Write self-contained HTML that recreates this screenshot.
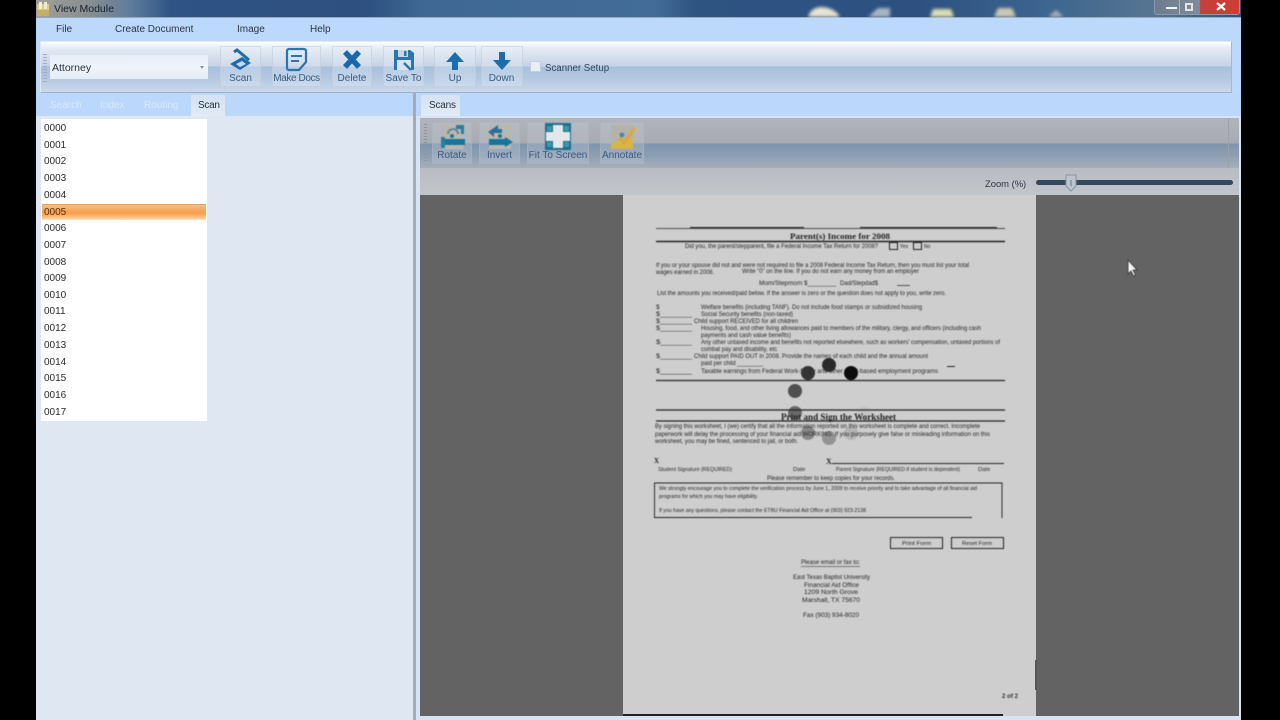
<!DOCTYPE html>
<html><head><meta charset="utf-8"><title>View Module</title>
<style>
html,body{margin:0;padding:0;width:1280px;height:720px;overflow:hidden;background:#000}
*{box-sizing:border-box}
body{font-family:"Liberation Sans",sans-serif}
#w{position:absolute;left:0;top:0;width:1280px;height:720px;overflow:hidden;filter:blur(.35px)}
.a{position:absolute}
.t{position:absolute;white-space:nowrap;line-height:12px;transform:translateY(-5px)}
.btn{position:absolute;background:rgba(235,242,250,.28);border:1px solid rgba(190,200,214,.55)}
.lb{position:absolute;white-space:nowrap;font-size:10px;line-height:12px;color:#3c5c80;transform:translateX(-50%)}
.li{position:absolute;left:44px;font-size:10px;line-height:12px;color:#2a2a2a;transform:translateY(1px)}
</style></head><body><div id="w">
<div class="a" style="left:36px;top:0;width:1205px;height:720px;background:#dfe7f3;overflow:hidden"></div>
<!-- title bar -->
<div class="a" style="left:36px;top:0;width:1205px;height:17px;background:linear-gradient(90deg,#a09f98 0,#8a8f92 50px,#5f7c9c 95px,#2f5384 135px,#2d5080 330px,#3f6894 385px,#436c98 620px,#2e5482 660px,#2d5080 880px,#3d6590 1010px,#567591 1118px,#2d5080 1205px)"></div>
<div class="a" style="left:36px;top:17px;width:1205px;height:1px;background:#94a8be"></div>
<svg class="a" style="left:0;top:0;filter:blur(1.6px)" width="1280" height="17">
<path d="M808 17Q811 7 822 7Q835 8 840 17Z" fill="#e6e2d4"/><path d="M868 17L878 8H890V17Z" fill="#a9b6c4"/><path d="M930 17L933 9H951L954 17Z" fill="#dcdcb0"/><path d="M994 17L998 8H1012L1016 17Z" fill="#c8c8b4"/><path d="M1048 17L1056 10 1064 17Z" fill="#a4aeb8"/>
</svg>
<svg class="a" style="left:37px;top:2px" width="13" height="14"><rect x="0" y="2" width="12" height="12" fill="#d8c98a"/><rect x="2" y="0" width="3" height="7" fill="#f3f0e0"/><rect x="7" y="0" width="3" height="7" fill="#efe9d0"/><rect x="0" y="8" width="12" height="6" fill="#c4ae68"/></svg>
<div class="t" style="left:54px;top:8px;font-size:10.5px;color:#17222e">View Module</div>
<!-- window controls -->
<div class="a" style="left:1154px;top:0;width:86px;height:15px;border:1px solid #8a9aac;border-top:0;border-radius:0 0 3px 3px;background:linear-gradient(90deg,#6c7c8e 0,#7f8b98 53%,#c4403a 54%,#d03c36 100%);overflow:hidden">
<div class="a" style="left:11px;top:7px;width:11px;height:2px;background:#f3f3f3"></div>
<div class="a" style="left:24px;top:0;width:1px;height:15px;background:#aab4be"></div>
<div class="a" style="left:30px;top:3px;width:8px;height:8px;border:2px solid #e4e4e4"></div>
<svg class="a" style="left:61px;top:2px" width="10" height="10"><path d="M1 1l8 7M9 1l-8 7" stroke="#fff" stroke-width="2.200"/></svg>
</div>
<!-- menu -->
<div class="a" style="left:36px;top:18px;width:1205px;height:23px;background:#bcd8fb"></div>
<div class="t" style="left:56px;top:29px;font-size:10px;color:#2a3644">File</div>
<div class="t" style="left:115px;top:29px;font-size:10px;color:#2a3644">Create Document</div>
<div class="t" style="left:237px;top:29px;font-size:10px;color:#2a3644">Image</div>
<div class="t" style="left:310px;top:29px;font-size:10px;color:#2a3644">Help</div>
<!-- toolbar -->
<div class="a" style="left:36px;top:41px;width:1205px;height:52px;background:#bcd8fb"></div>
<div class="a" style="left:40px;top:41px;width:1192px;height:52px;border:1px solid #dfe7f2;border-bottom-color:#9fb0c6;border-right-color:#a8b8cc;background:linear-gradient(180deg,#fdfefe 0,#e3eaf4 14%,#c6d3e5 48%,#a8c0dc 50%,#b2c7e0 70%,#cad8ea 100%)"></div>
<div class="a" style="left:43px;top:54px;width:4px;height:28px;background:repeating-linear-gradient(180deg,#9db0c6 0 1px,transparent 1px 3px)"></div>
<div class="a" style="left:50px;top:55px;width:158px;height:24px;background:linear-gradient(180deg,#e6eef8,#f0f4fa 50%,#e4ecf6)"></div>
<div class="t" style="left:52px;top:67px;font-size:10.5px;color:#26323e">Attorney</div>
<div class="a" style="left:200px;top:66px;border:2px solid transparent;border-top:3px solid #8496aa;border-bottom:0"></div>

<div class="btn" style="left:220px;top:46px;width:41px;height:41px"></div>
<div class="btn" style="left:272px;top:46px;width:49px;height:41px"></div>
<div class="btn" style="left:332px;top:46px;width:40px;height:41px"></div>
<div class="btn" style="left:383px;top:46px;width:41px;height:41px"></div>
<div class="btn" style="left:434px;top:46px;width:42px;height:41px"></div>
<div class="btn" style="left:481px;top:46px;width:42px;height:41px"></div>
<svg class="a" style="left:0;top:40px;filter:blur(.3px)" width="540" height="36">
<!-- scan -->
<path d="M234 12l3-2 12 10" stroke="#1d6cab" stroke-width="3" fill="none"/><path d="M230 24l12-7 9 6-11 7z" fill="#1d6cab"/><path d="M236 24l6-3 4 3-6 3z" fill="#c9d8ea"/>
<!-- make docs -->
<path d="M287 11a2 2 0 0 1 2-2h15a2 2 0 0 1 2 2v11l-7 8h-10a2 2 0 0 1-2-2z" fill="none" stroke="#2c74ae" stroke-width="2.200"/><path d="M291 16h11M291 21h8" stroke="#2c74ae" stroke-width="2"/>
<!-- delete -->
<path d="M345 12l14 15M359 12l-14 15" stroke="#1b67ac" stroke-width="5.500"/>
<!-- save -->
<path d="M394 10h16l4 3v17h-20z" fill="#2c74ae"/><rect x="398" y="10" width="10" height="7" fill="#c7d7ea"/><rect x="404" y="11" width="2.500" height="5" fill="#2c74ae"/><rect x="397" y="20" width="14" height="10" fill="#d8e3f0"/><path d="M404 23l7 7" stroke="#2c74ae" stroke-width="2.500"/>
<!-- up -->
<path d="M455 12l9 10h-6v8h-6v-8h-6z" fill="#1d6cb0"/>
<!-- down -->
<path d="M499 12h6v8h6l-9 10-9-10h6z" fill="#1d6cb0"/>
</svg>
<div class="lb" style="left:240.5px;top:72.500px">Scan</div>
<div class="lb" style="left:296.5px;top:72.500px;letter-spacing:-.4px">Make Docs</div>
<div class="lb" style="left:352px;top:72.500px">Delete</div>
<div class="lb" style="left:403.5px;top:72.500px">Save To</div>
<div class="lb" style="left:455px;top:72.500px">Up</div>
<div class="lb" style="left:501.5px;top:72.500px">Down</div>
<div class="a" style="left:530px;top:61px;width:11px;height:11px;background:#e8eef6;border:1px solid #c2cedd"></div>
<div class="t" style="left:545px;top:68px;font-size:9.7px;color:#33465c">Scanner Setup</div>

<!-- tab strips -->
<div class="a" style="left:36px;top:93px;width:1205px;height:23px;background:#bbd7fb"></div>
<div class="t" style="left:50px;top:105px;font-size:10px;color:#dbe8fa">Search</div>
<div class="t" style="left:100px;top:105px;font-size:10px;color:#dbe8fa">Index</div>
<div class="t" style="left:144px;top:105px;font-size:10px;color:#dbe8fa">Routing</div>
<div class="a" style="left:191px;top:95px;width:34px;height:21px;background:linear-gradient(180deg,#d4e2f4,#e2eaf5)"></div>
<div class="t" style="left:198px;top:105px;font-size:10px;letter-spacing:-.3px;color:#28323e">Scan</div>
<!-- left panel -->
<div class="a" style="left:36px;top:116px;width:377px;height:604px;background:#dfe7f3"></div>
<div class="a" style="left:41px;top:119px;width:166px;height:302px;background:#fff"></div>
<div class="a" style="left:42px;top:204px;width:164px;height:16px;background:linear-gradient(180deg,#f4c08c 0,#f8a75c 35%,#f99f4e 55%,#fbc488 85%,#fde6bc 100%);border-top:1px solid #d9a070"></div>
<div class="li" style="top:122px">0000</div><div class="li" style="top:139px">0001</div><div class="li" style="top:155px">0002</div><div class="li" style="top:172px">0003</div><div class="li" style="top:189px">0004</div><div class="li" style="top:206px;color:#5a3010">0005</div><div class="li" style="top:222px">0006</div><div class="li" style="top:239px">0007</div><div class="li" style="top:256px">0008</div><div class="li" style="top:272px">0009</div><div class="li" style="top:289px">0010</div><div class="li" style="top:305px">0011</div><div class="li" style="top:322px">0012</div><div class="li" style="top:339px">0013</div><div class="li" style="top:356px">0014</div><div class="li" style="top:372px">0015</div><div class="li" style="top:389px">0016</div><div class="li" style="top:406px">0017</div>
<!-- splitter -->
<div class="a" style="left:413px;top:93px;width:3px;height:627px;background:#a3abb5"></div>
<div class="a" style="left:416px;top:116px;width:825px;height:604px;background:#d6e4f5"></div>
<div class="a" style="left:421px;top:95px;width:39px;height:21px;background:linear-gradient(180deg,#d4e2f4,#e2eaf5)"></div>
<div class="t" style="left:429px;top:104.500px;font-size:10px;letter-spacing:-.2px;color:#28323e">Scans</div>
<!-- gray toolbar -->
<div class="a" style="left:420px;top:118px;width:819px;height:50px;background:linear-gradient(180deg,#b1b4ba 0,#a7abb2 50%,#7e94ae 52%,#8d9eb3 75%,#a6afbb 100%)"></div>
<div class="a" style="left:424px;top:124px;width:3px;height:38px;background:repeating-linear-gradient(180deg,#8d96a2 0 1px,transparent 1px 3px)"></div>
<div class="a" style="left:1228px;top:118px;width:1px;height:50px;background:#9aa2ac"></div>
<div class="btn" style="left:432px;top:122px;width:40px;height:42px;background:rgba(200,208,220,.28);border-color:rgba(170,178,190,.6)"></div>
<div class="btn" style="left:479px;top:122px;width:41px;height:42px;background:rgba(200,208,220,.28);border-color:rgba(170,178,190,.6)"></div>
<div class="btn" style="left:527px;top:122px;width:62px;height:42px;background:rgba(200,208,220,.28);border-color:rgba(170,178,190,.6)"></div>
<div class="btn" style="left:600px;top:122px;width:44px;height:42px;background:rgba(200,208,220,.28);border-color:rgba(170,178,190,.6)"></div>
<svg class="a" style="left:0;top:120px;filter:blur(.5px)" width="660" height="34">
<!-- rotate -->
<rect x="442" y="5" width="22" height="24" fill="#b9b8b0"/><path d="M448 14a5 5 0 0 1 10 0" fill="none" stroke="#5f86a0" stroke-width="2"/><path d="M456 5h8v9h-3v-5h-5z" fill="#2a7f9c"/><rect x="441" y="19" width="24" height="6" fill="#17749a"/><path d="M441 17v11h4v-11z" fill="#2a7f9c"/><circle cx="452" cy="16" r="2" fill="#246e92"/>
<!-- invert -->
<rect x="489" y="5" width="22" height="24" fill="#b9b8b0"/><path d="M488 12l10-7v4h4v4h-8v4z" fill="#2d6f9c"/><rect x="489" y="19" width="20" height="6" fill="#17749a"/><path d="M505 17l8 5-8 5z" fill="#17749a"/><circle cx="500" cy="16" r="2" fill="#246e92"/>
<!-- fit -->
<rect x="545" y="3" width="26" height="27" fill="#1d6e90"/><path d="M553 5h10v7h7v9h-7v7h-10v-7h-7v-9h7z" fill="#e4e8ec"/><rect x="547" y="6" width="5" height="5" fill="#3b9aa8"/><rect x="564" y="6" width="5" height="5" fill="#3b9aa8"/><rect x="547" y="22" width="5" height="5" fill="#3b9aa8"/><rect x="564" y="22" width="5" height="5" fill="#3b9aa8"/>
<!-- annotate -->
<rect x="611" y="5" width="22" height="24" fill="#b5b2a8"/><path d="M611 23l22-5v11h-22z" fill="#d8b548"/><circle cx="622" cy="15" r="2.400" fill="#4c84a8"/><path d="M619 18l5 5 11-15" fill="none" stroke="#e0a82c" stroke-width="3"/>
</svg>
<div class="lb" style="left:452px;top:149.500px">Rotate</div>
<div class="lb" style="left:499.5px;top:149.500px">Invert</div>
<div class="lb" style="left:558px;top:149.500px">Fit To Screen</div>
<div class="lb" style="left:622px;top:149.500px">Annotate</div>
<!-- zoom bar -->
<div class="a" style="left:420px;top:168px;width:819px;height:27px;background:linear-gradient(180deg,#b9bdc3,#c2c5ca)"></div>
<div class="t" style="left:985px;top:183px;font-size:9.4px;color:#2e3640">Zoom (%)</div>
<div class="a" style="left:1036px;top:180px;width:197px;height:5px;border-radius:3px;background:#34495f"></div>
<svg class="a" style="left:1065px;top:174px" width="13" height="18"><path d="M1 1h10v11l-5 5-5-5z" fill="#bcc4cf" stroke="#8593a4"/><path d="M6 6v6" stroke="#6a7686"/></svg>
<!-- canvas -->
<div class="a" style="left:420px;top:195px;width:819px;height:521px;background:#636363"></div>
<div class="a" style="left:623px;top:195px;width:413px;height:521px;background:#cecece"></div>
<div class="a" style="left:1035px;top:660px;width:2px;height:30px;background:#555"></div>
<div class="a" style="left:623px;top:714px;width:380px;height:2px;background:#222"></div>
<!-- document -->
<svg class="a" style="left:0;top:0;filter:blur(.4px)" width="1280" height="720" font-family="Liberation Sans,sans-serif" font-size="6.500" fill="#262626">
<g stroke="none">
<circle cx="795" cy="413" r="7" fill="#5f5f5f" opacity=".9"/><circle cx="808" cy="433" r="7" fill="#777" opacity=".8"/><circle cx="829" cy="438" r="7" fill="#888" opacity=".85"/><circle cx="851" cy="433" r="7" fill="#aaa" opacity=".7"/><circle cx="864" cy="413" r="7" fill="#bbb" opacity=".5"/>
</g>
<g stroke="#222" fill="none">
<path d="M656 228.500H1005" stroke-width=".8"/><path d="M690 227.500H804M860 227.500H997" stroke-width="1"/>
<path d="M656 241.500H1005" stroke-width="1.500"/>
<rect x="889.500" y="242.500" width="8" height="7"/><rect x="913.500" y="242.500" width="8" height="7"/>
<path d="M656 380.500H1005" stroke-width="1.200"/>
<path d="M656 410H1005" stroke-width="1.300"/><path d="M656 421H1005" stroke-width="1.300"/>
<path d="M832 463.500H1004" stroke-width="1"/>
<path d="M654.500 518V483H1002V518M654 517.500H972" stroke-width=".9"/>
<rect x="890.500" y="537.500" width="52" height="11"/><rect x="951.500" y="537.500" width="52" height="11"/>
<path d="M947 366.500H955" stroke-width="1"/><path d="M897 285.500H910" stroke-width=".7"/>
<path d="M801 566.500H860" stroke-width=".6"/>
</g>
<text x="790" y="239" font-family="Liberation Serif,serif" font-weight="bold" font-size="8.500" fill="#222" textLength="100" lengthAdjust="spacingAndGlyphs">Parent(s) Income for 2008</text>
<text x="685" y="248" textLength="193" lengthAdjust="spacingAndGlyphs">Did you, the parent/stepparent, file a Federal Income Tax Return for 2008?</text>
<text x="900" y="248" font-size="5">Yes</text><text x="924" y="248" font-size="5">No</text>
<text x="656" y="267" textLength="313" lengthAdjust="spacingAndGlyphs">If you or your spouse did not and were not required to file a 2008 Federal Income Tax Return, then you must list your total</text>
<text x="656" y="274" textLength="58" lengthAdjust="spacingAndGlyphs">wages earned in 2008.</text>
<text x="742" y="273" textLength="177" lengthAdjust="spacingAndGlyphs">Write "0" on the line. If you do not earn any money from an employer</text>
<text x="759" y="285" textLength="77" lengthAdjust="spacingAndGlyphs">Mom/Stepmom $________</text>
<text x="840" y="285" textLength="38" lengthAdjust="spacingAndGlyphs">Dad/Stepdad$</text>
<text x="657" y="295" textLength="289" lengthAdjust="spacingAndGlyphs">List the amounts you received/paid below.  If the answer is zero or the question does not apply to you, write zero.</text>
<text x="656" y="309">$</text><text x="701" y="309" textLength="221" lengthAdjust="spacingAndGlyphs">Welfare benefits (including TANF).  Do not include food stamps or subsidized housing</text>
<text x="656" y="316" textLength="36" lengthAdjust="spacingAndGlyphs">$________</text><text x="701" y="316" textLength="92" lengthAdjust="spacingAndGlyphs">Social Security benefits (non-taxed)</text>
<text x="656" y="323" textLength="36" lengthAdjust="spacingAndGlyphs">$________</text><text x="694" y="323" textLength="104" lengthAdjust="spacingAndGlyphs">Child support RECEIVED for all children</text>
<text x="656" y="330" textLength="36" lengthAdjust="spacingAndGlyphs">$________</text><text x="701" y="330" textLength="280" lengthAdjust="spacingAndGlyphs">Housing, food, and other living allowances paid to members of the military, clergy, and officers (including cash</text>
<text x="701" y="337" textLength="90" lengthAdjust="spacingAndGlyphs">payments and cash value benefits)</text>
<text x="656" y="344" textLength="36" lengthAdjust="spacingAndGlyphs">$_______</text><text x="701" y="344" textLength="299" lengthAdjust="spacingAndGlyphs">Any other untaxed income and benefits not reported elsewhere, such as workers' compensation, untaxed portions of</text>
<text x="701" y="351" textLength="76" lengthAdjust="spacingAndGlyphs">combat pay and disability, etc</text>
<text x="656" y="358" textLength="36" lengthAdjust="spacingAndGlyphs">$________</text><text x="694" y="358" textLength="234" lengthAdjust="spacingAndGlyphs">Child support PAID OUT in 2008.  Provide the names of each child and the annual amount</text>
<text x="701" y="365" textLength="62" lengthAdjust="spacingAndGlyphs">paid per child ________</text>
<text x="656" y="373" textLength="36" lengthAdjust="spacingAndGlyphs" fill="#111">$________</text><text x="701" y="373" textLength="237" lengthAdjust="spacingAndGlyphs">Taxable earnings from Federal Work-Study and other need-based employment programs</text>
<text x="781" y="420" font-family="Liberation Serif,serif" font-weight="bold" font-size="9" fill="#222" textLength="115" lengthAdjust="spacingAndGlyphs">Print and Sign the Worksheet</text>
<text x="655" y="428" textLength="325" lengthAdjust="spacingAndGlyphs">By signing this worksheet, I (we) certify that all the information reported on this worksheet is complete and correct.  Incomplete</text>
<text x="655" y="436" textLength="335" lengthAdjust="spacingAndGlyphs">paperwork will delay the processing of your financial aid  WORKING.  If you purposely give false or misleading information on this</text>
<text x="655" y="443" textLength="143" lengthAdjust="spacingAndGlyphs">worksheet, you may be fined, sentenced to jail, or both.</text>
<text x="654" y="463" font-family="Liberation Serif,serif" font-weight="bold" font-size="7" fill="#222">X</text>
<text x="826" y="464" font-family="Liberation Serif,serif" font-weight="bold" font-size="8" fill="#222">X</text>
<text x="658" y="471" font-size="5.800" textLength="74" lengthAdjust="spacingAndGlyphs">Student Signature (REQUIRED)</text>
<text x="793" y="471" font-size="5.800">Date</text>
<text x="836" y="471" font-size="5.800" textLength="124" lengthAdjust="spacingAndGlyphs">Parent Signature (REQUIRED if student is dependent)</text>
<text x="978" y="471" font-size="5.800">Date</text>
<text x="767" y="480" textLength="128" lengthAdjust="spacingAndGlyphs">Please remember to keep copies for your records.</text>
<text x="659" y="490" font-size="5.800" textLength="318" lengthAdjust="spacingAndGlyphs">We strongly encourage you to complete the verification process by June 1, 2009 to receive priority and to take advantage of all financial aid</text>
<text x="659" y="498" font-size="5.800" textLength="99" lengthAdjust="spacingAndGlyphs">programs for which you may have eligibility.</text>
<text x="659" y="512" font-size="5.800" textLength="207" lengthAdjust="spacingAndGlyphs">If you have any questions, please contact the ETBU Financial Aid Office at (903) 923-2138</text>
<text x="902" y="545" font-size="5.800" textLength="29" lengthAdjust="spacingAndGlyphs">Print Form</text>
<text x="962" y="545" font-size="5.800" textLength="30" lengthAdjust="spacingAndGlyphs">Reset Form</text>
<text x="801" y="564" textLength="59" lengthAdjust="spacingAndGlyphs">Please email or fax to:</text>
<text x="793" y="579" textLength="77" lengthAdjust="spacingAndGlyphs">East Texas Baptist University</text>
<text x="804" y="587" textLength="55" lengthAdjust="spacingAndGlyphs">Financial Aid Office</text>
<text x="804" y="594" textLength="54" lengthAdjust="spacingAndGlyphs">1209 North Grove</text>
<text x="802" y="602" textLength="58" lengthAdjust="spacingAndGlyphs">Marshall, TX  75670</text>
<text x="803" y="617" textLength="56" lengthAdjust="spacingAndGlyphs">Fax (903) 934-8020</text>
<text x="1002" y="698" font-weight="bold" textLength="16" lengthAdjust="spacingAndGlyphs" fill="#333">2 of 2</text>
<g stroke="none">
<circle cx="808" cy="373" r="7" fill="#333"/><circle cx="829" cy="365" r="7" fill="#2a2a2a"/><circle cx="851" cy="373" r="7" fill="#0c0c0c"/><circle cx="795" cy="391" r="7" fill="#505050"/>
</g>
<path d="M1128 260v14l3-3 2.500 5 2-1-2.500-5h4z" fill="#f4f4f4" stroke="#333" stroke-width=".8"/>
</svg>
</div></body></html>
